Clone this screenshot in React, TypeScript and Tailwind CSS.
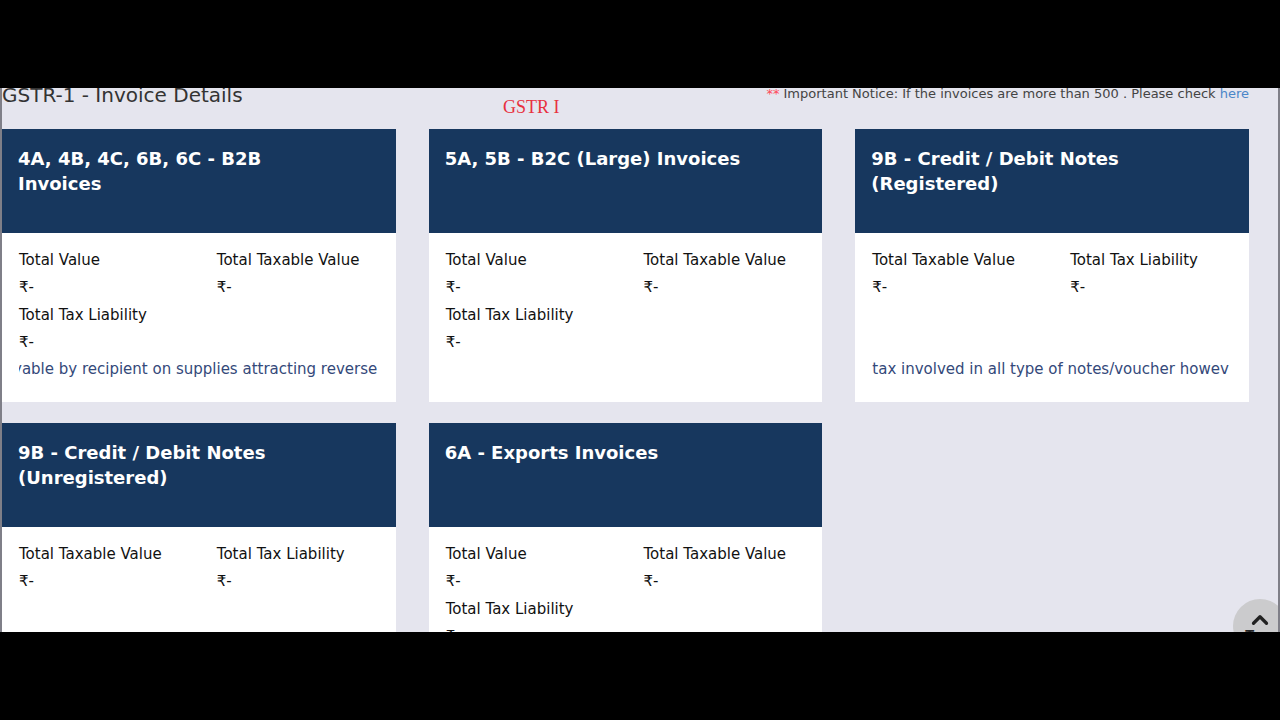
import { ChevronUp } from 'lucide-react';

interface InvoiceSection {
  id: string;
  title: string;
  fields: string[];
  note?: string;
  noteClass?: string;
}

const sections: InvoiceSection[] = [
  {
    id: 'b2b',
    title: '4A, 4B, 4C, 6B, 6C - B2B Invoices',
    fields: ['Total Value', 'Total Taxable Value', 'Total Tax Liability'],
    note: 'yable by recipient on supplies attracting reverse',
    noteClass: '-indent-1.5',
  },
  {
    id: 'b2cl',
    title: '5A, 5B - B2C (Large) Invoices',
    fields: ['Total Value', 'Total Taxable Value', 'Total Tax Liability'],
  },
  {
    id: 'cdnr',
    title: '9B - Credit / Debit Notes (Registered)',
    fields: ['Total Taxable Value', 'Total Tax Liability'],
    note: 'tax involved in all type of notes/voucher howev',
  },
  {
    id: 'cdnur',
    title: '9B - Credit / Debit Notes (Unregistered)',
    fields: ['Total Taxable Value', 'Total Tax Liability'],
  },
  {
    id: 'exp',
    title: '6A - Exports Invoices',
    fields: ['Total Value', 'Total Taxable Value', 'Total Tax Liability'],
  },
];

function InvoiceCard({ title, fields, note, noteClass = '' }: InvoiceSection) {
  return (
    <section className="flex flex-col bg-white">
      <h2 className="h-[104px] bg-[#17375e] pl-4 pr-16 pt-[17px] text-lg font-bold leading-[25px] text-white">
        {title}
      </h2>
      <div className="flex h-[169px] flex-col px-[17px] pt-[13px] text-[15px] text-[#111]">
        <dl className="grid h-[110px] grid-cols-2 content-start gap-x-9">
          {fields.map((field) => (
            <div key={field}>
              <dt className="whitespace-nowrap leading-7">{field}</dt>
              <dd className="leading-[27px]">₹-</dd>
            </div>
          ))}
        </dl>
        {note && (
          <p className={`overflow-hidden whitespace-nowrap leading-[26px] text-[#34497a] ${noteClass}`}>{note}</p>
        )}
      </div>
    </section>
  );
}

export default function App() {
  return (
    <div className="flex h-screen flex-col bg-black py-[88px] font-['DejaVu_Sans',Verdana,sans-serif]">
      <main className="relative min-h-0 flex-1 overflow-hidden border-x-2 border-[#7f7f88] bg-[#e5e5ee] pr-[29px]">
        <header className="flex h-[41px] items-start justify-between">
          <h1 className="-mt-1 text-xl leading-[22px] text-[#333]">GSTR-1 - Invoice Details</h1>
          <p className="-mt-1 text-[13px] leading-5 text-[#444]">
            <span className="text-[#ff4a5a]">**</span> Important Notice: If the invoices are more than 500 . Please check{' '}
            <a href="#more-invoices" className="text-[#4a86c8]">here</a>
          </p>
        </header>

        {/* Caption placed over the page */}
        <span className="absolute left-[501px] top-2 font-['Liberation_Serif',serif] text-lg leading-[22px] text-[#e8303e]">
          GSTR I
        </span>

        <div className="grid grid-cols-3 gap-x-[33px] gap-y-[21px]">
          {sections.map((section) => (
            <InvoiceCard key={section.id} {...section} />
          ))}
        </div>

        <button
          type="button"
          className="absolute -bottom-[21px] -right-[9px] flex h-[54px] w-[54px] flex-col items-center rounded-full bg-[#cbcbcd] pr-1 pt-2 text-[13px] font-bold leading-[8px] text-[#222]"
        >
          <ChevronUp className="ml-1 h-[26px] w-[26px] shrink-0" strokeWidth={3} />
          <span className="-mt-0.5">Top</span>
        </button>
      </main>
    </div>
  );
}
